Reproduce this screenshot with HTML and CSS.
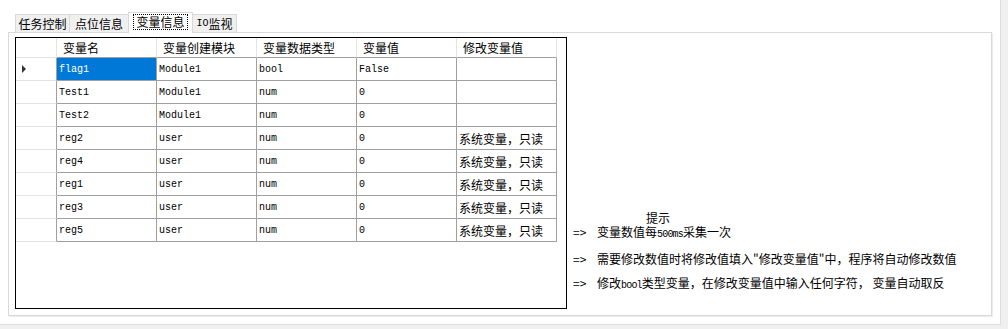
FILE: index.html
```html
<!DOCTYPE html>
<html lang="zh-CN">

<head>
    <meta charset="UTF-8">
    <meta name="viewport" content="width=device-width, initial-scale=1.0">
    <title>变量信息</title>
    <link rel="stylesheet" href="styles.css">
</head>

<body>
    <div class="window">
        <div class="tabs">
            <div class="tab tab1">任务控制</div>
            <div class="tab tab2">点位信息</div>
            <div class="tab tab3 active"><span class="focus">变量信息</span></div>
            <div class="tab tab4"><span class="en">IO</span>监视</div>
        </div>

        <div class="panel">
            <div class="grid">
                <div class="cells">
                    <div class="hd corner"></div>
                    <div class="hd">变量名</div>
                    <div class="hd">变量创建模块</div>
                    <div class="hd">变量数据类型</div>
                    <div class="hd">变量值</div>
                    <div class="hd">修改变量值</div>

                    <div class="rowhead"><span class="arrow-right"></span></div>
                    <div class="cell selected">flag1</div>
                    <div class="cell">Module1</div>
                    <div class="cell">bool</div>
                    <div class="cell">False</div>
                    <div class="cell"></div>

                    <div class="rowhead"></div>
                    <div class="cell">Test1</div>
                    <div class="cell">Module1</div>
                    <div class="cell">num</div>
                    <div class="cell">0</div>
                    <div class="cell"></div>

                    <div class="rowhead"></div>
                    <div class="cell">Test2</div>
                    <div class="cell">Module1</div>
                    <div class="cell">num</div>
                    <div class="cell">0</div>
                    <div class="cell"></div>

                    <div class="rowhead"></div>
                    <div class="cell">reg2</div>
                    <div class="cell">user</div>
                    <div class="cell">num</div>
                    <div class="cell">0</div>
                    <div class="cell cn">系统变量，只读</div>

                    <div class="rowhead"></div>
                    <div class="cell">reg4</div>
                    <div class="cell">user</div>
                    <div class="cell">num</div>
                    <div class="cell">0</div>
                    <div class="cell cn">系统变量，只读</div>

                    <div class="rowhead"></div>
                    <div class="cell">reg1</div>
                    <div class="cell">user</div>
                    <div class="cell">num</div>
                    <div class="cell">0</div>
                    <div class="cell cn">系统变量，只读</div>

                    <div class="rowhead"></div>
                    <div class="cell">reg3</div>
                    <div class="cell">user</div>
                    <div class="cell">num</div>
                    <div class="cell">0</div>
                    <div class="cell cn">系统变量，只读</div>

                    <div class="rowhead"></div>
                    <div class="cell">reg5</div>
                    <div class="cell">user</div>
                    <div class="cell">num</div>
                    <div class="cell">0</div>
                    <div class="cell cn">系统变量，只读</div>
                </div>
            </div>

            <div class="info">
                <div class="tip">提示</div>
                <div class="line"><span class="arrow">=&gt;</span>变量数值每<span class="en small">500ms</span>采集一次</div>
                <div class="line"><span class="arrow">=&gt;</span>需要修改数值时将修改值填入"修改变量值"中，程序将自动修改数值</div>
                <div class="line"><span class="arrow">=&gt;</span>修改<span class="en small">bool</span>类型变量，在修改变量值中输入任何字符， 变量自动取反</div>
            </div>
        </div>
    </div>
</body>

</html>
```

FILE: styles.css
```css
body {
    margin: 0;
    background-color: #f0f0f0;
    font-family: "Noto Sans CJK SC", "Microsoft YaHei", sans-serif;
    font-size: 12px;
    color: #000;
}

.window {
    width: 1001px;
    height: 325px;
    box-sizing: border-box;
    background-color: #fff;
    border-right: 1px solid #dcdcdc;
    border-bottom: 1px solid #dcdcdc;
    padding: 12px 0 0 8px;
}

.en {
    font-family: "Liberation Mono", monospace;
    font-size: 10px;
}

.small {
    letter-spacing: -0.8px;
}

/* tabs */

.tabs {
    display: flex;
    align-items: flex-end;
    height: 20px;
    padding-left: 7px;
}

.tab {
    height: 18px;
    box-sizing: border-box;
    border: 1px solid #d9d9d9;
    border-bottom: none;
    background-color: #f0f0f0;
    margin-right: -1px;
    display: flex;
    align-items: center;
    justify-content: center;
    line-height: 16px;
}

.tab1 {
    width: 55px;
}

.tab2 {
    width: 60px;
}

.tab3 {
    width: 65px;
}

.tab4 {
    width: 45px;
}

.tab.active {
    height: 21px;
    margin-bottom: -1px;
    background-color: #fff;
    position: relative;
    z-index: 1;
    padding-bottom: 2px;
}

.focus {
    border: 1px dotted #000;
    padding: 0 2px;
    line-height: 14px;
}

/* panel */

.panel {
    width: 984px;
    height: 284px;
    box-sizing: border-box;
    border: 1px solid #d9d9d9;
    box-shadow: 1px 1px 0 #ececec;
    display: flex;
    align-items: flex-start;
    padding: 4px 0 0 6px;
}

.grid {
    width: 552px;
    height: 272px;
    box-sizing: border-box;
    border: 1px solid #000;
    flex-shrink: 0;
}

.cells {
    display: grid;
    grid-template-columns: 41px repeat(5, 100px);
}

.hd {
    height: 20px;
    box-sizing: border-box;
    border-right: 1px solid #e3e3e3;
    border-bottom: 1px solid #a0a0a0;
    padding-left: 6px;
    line-height: 19px;
    white-space: nowrap;
}

.hd.corner {
    border-bottom-color: #e3e3e3;
}

.rowhead {
    height: 23px;
    box-sizing: border-box;
    border-right: 1px solid #a0a0a0;
    border-bottom: 1px solid #e3e3e3;
    display: flex;
    align-items: center;
    padding-left: 6px;
}

.arrow-right {
    width: 0;
    height: 0;
    border-left: 4px solid #333;
    border-top: 4px solid transparent;
    border-bottom: 4px solid transparent;
}

.cell {
    height: 23px;
    box-sizing: border-box;
    border-right: 1px solid #a0a0a0;
    border-bottom: 1px solid #a0a0a0;
    padding-left: 2px;
    display: flex;
    align-items: center;
    font-family: "Liberation Mono", monospace;
    font-size: 10px;
    white-space: nowrap;
}

.cell.cn {
    font-family: "Noto Sans CJK SC", sans-serif;
    font-size: 12px;
}

.cell.selected {
    background-color: #0078d7;
    color: #fff;
}

/* hints */

.info {
    margin-left: 6px;
    padding-top: 175px;
    white-space: nowrap;
}

.tip {
    padding-left: 73px;
    height: 12px;
    line-height: 12px;
    margin-bottom: -4px;
}

.line {
    line-height: 24px;
}

.arrow {
    display: inline-block;
    width: 24px;
}
```
